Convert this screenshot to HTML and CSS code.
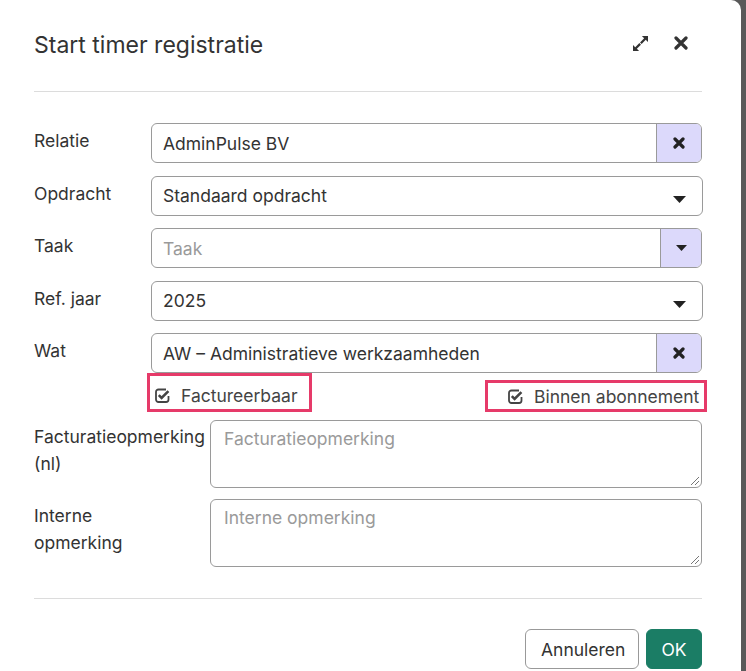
FILE: index.html
```html
<!DOCTYPE html>
<html lang="nl">
<head>
<meta charset="utf-8">
<title>Start timer registratie</title>
<link rel="stylesheet" href="styles.css">
</head>
<body>
<div class="modal">
  <div class="header">
    <h1 class="title">Start timer registratie</h1>
    <div class="tools">
      <svg class="icon-expand" width="16" height="16" viewBox="0 0 16 16">
        <path d="M16 0 L16 6.5 L13.6 4.1 L9.2 8.5 L7.5 6.8 L11.9 2.4 L9.5 0 Z" fill="#333"/>
        <path d="M0 16 L0 9.5 L2.4 11.9 L6.8 7.5 L8.5 9.2 L4.1 13.6 L6.5 16 Z" fill="#333"/>
      </svg>
      <svg class="icon-close" width="14" height="14" viewBox="0 0 14 14">
        <path d="M2 2 L12 12 M12 2 L2 12" stroke="#333" stroke-width="3.2" stroke-linecap="round"/>
      </svg>
    </div>
  </div>

  <div class="body">
    <div class="row">
      <div class="label">Relatie</div>
      <div class="field">
        <div class="control"><span class="value">AdminPulse BV</span></div>
        <div class="addon">
          <svg width="12" height="12" viewBox="0 0 12 12"><path d="M2 2 L10 10 M10 2 L2 10" stroke="#222" stroke-width="3.2" stroke-linecap="round"/></svg>
        </div>
      </div>
    </div>

    <div class="row">
      <div class="label">Opdracht</div>
      <div class="field select">
        <div class="control"><span class="value">Standaard opdracht</span></div>
        <svg class="caret" width="13" height="7" viewBox="0 0 13 7"><path d="M0 0 H13 L6.5 7 Z" fill="#222"/></svg>
      </div>
    </div>

    <div class="row">
      <div class="label">Taak</div>
      <div class="field">
        <div class="control"><span class="placeholder">Taak</span></div>
        <div class="addon addon-narrow">
          <svg width="11" height="6" viewBox="0 0 11 6"><path d="M0 0 H11 L5.5 6 Z" fill="#222"/></svg>
        </div>
      </div>
    </div>

    <div class="row">
      <div class="label">Ref. jaar</div>
      <div class="field select">
        <div class="control"><span class="value">2025</span></div>
        <svg class="caret" width="13" height="7" viewBox="0 0 13 7"><path d="M0 0 H13 L6.5 7 Z" fill="#222"/></svg>
      </div>
    </div>

    <div class="row">
      <div class="label">Wat</div>
      <div class="field">
        <div class="control"><span class="value">AW – Administratieve werkzaamheden</span></div>
        <div class="addon">
          <svg width="12" height="12" viewBox="0 0 12 12"><path d="M2 2 L10 10 M10 2 L2 10" stroke="#222" stroke-width="3.2" stroke-linecap="round"/></svg>
        </div>
      </div>
    </div>

    <div class="checks">
      <label class="check check-left">
        <svg width="15" height="15" viewBox="0 0 15 15"><path d="M11 1.5 H3.5 A2.5 2.5 0 0 0 1 4 V11.5 A2.5 2.5 0 0 0 3.5 14 H11 A2.5 2.5 0 0 0 13.5 11.5 V8" fill="none" stroke="#444" stroke-width="1.8"/><path d="M3.8 7.2 L6.6 10 L13.4 3.2" fill="none" stroke="#444" stroke-width="2.6"/></svg>
        <span>Factureerbaar</span>
      </label>
      <label class="check check-right">
        <svg width="15" height="15" viewBox="0 0 15 15"><path d="M11 1.5 H3.5 A2.5 2.5 0 0 0 1 4 V11.5 A2.5 2.5 0 0 0 3.5 14 H11 A2.5 2.5 0 0 0 13.5 11.5 V8" fill="none" stroke="#444" stroke-width="1.8"/><path d="M3.8 7.2 L6.6 10 L13.4 3.2" fill="none" stroke="#444" stroke-width="2.6"/></svg>
        <span>Binnen abonnement</span>
      </label>
    </div>

    <div class="row row-text">
      <div class="label label-wide">Facturatieopmerking<br>(nl)</div>
      <div class="textarea"><span class="placeholder">Facturatieopmerking</span><span class="grip"></span></div>
    </div>

    <div class="row row-text">
      <div class="label label-wide">Interne<br>opmerking</div>
      <div class="textarea"><span class="placeholder">Interne opmerking</span><span class="grip"></span></div>
    </div>
  </div>

  <div class="footer">
    <button class="btn btn-default">Annuleren</button>
    <button class="btn btn-primary">OK</button>
  </div>
</div>
</body>
</html>
```

FILE: styles.css
```css
html, body {
  margin: 0;
  padding: 0;
}
body {
  background: #595959;
  font-family: Inter, "Noto Sans", sans-serif;
  color: #333;
  overflow: hidden;
}
.modal {
  width: 741px;
  height: 700px;
  background: #fff;
  border-top-right-radius: 10px;
  box-sizing: border-box;
  padding: 0 39px 0 34px;
}
.header {
  height: 91px;
  border-bottom: 1px solid #dcdcdc;
  display: flex;
  align-items: center;
  justify-content: space-between;
}
.title {
  margin: 0;
  font-size: 23px;
  font-weight: 400;
  color: #333;
  padding-bottom: 1px;
}
.tools {
  display: flex;
  align-items: center;
  gap: 26px;
  margin-right: 14px;
  padding-bottom: 5px;
}
.icon-expand { width: 15px; height: 15px; }
.body {
  padding-top: 31px;
}
.row {
  display: flex;
  align-items: flex-start;
  margin-bottom: 12.5px;
}
.label {
  width: 117px;
  flex: none;
  font-size: 17.5px;
  line-height: 27px;
  padding-top: 4px;
  color: #333;
}
.field {
  flex: 1;
  height: 40px;
  box-sizing: border-box;
  border: 1px solid #9a9a9a;
  border-radius: 6px;
  display: flex;
  align-items: stretch;
  overflow: hidden;
}
.control {
  flex: 1;
  display: flex;
  align-items: center;
  padding-left: 11px;
  font-size: 17.5px;
}
.value { color: #333; }
.placeholder { color: #9a9a9a; }
.addon {
  width: 44px;
  flex: none;
  background: #dcd9fb;
  border-left: 1px solid #9a9a9a;
  display: flex;
  align-items: center;
  justify-content: center;
}
.addon-narrow { width: 40px; }
.select {
  align-items: center;
  margin-right: -1px;
}
.select .control { align-self: stretch; padding-bottom: 1px; }
.caret {
  margin-right: 16px;
  margin-top: 8px;
}
.checks {
  display: flex;
  justify-content: space-between;
  align-items: flex-end;
  margin: -12.5px -5px 0 113px;
  height: 39px;
}
.check {
  display: flex;
  align-items: center;
  gap: 11px;
  border: 3px solid #e63a69;
  box-sizing: border-box;
  font-size: 17.5px;
  color: #444;
}
.check-left {
  height: 39px;
  width: 165px;
  padding-left: 5px;
  padding-top: 5px;
}
.check-right {
  height: 32px;
  width: 222px;
  padding-left: 20px;
}
.row-text {
  margin-top: 8px;
  margin-bottom: 11px;
}
.label-wide {
  width: 176px;
  padding-top: 3px;
  white-space: nowrap;
}
.textarea {
  flex: 1;
  height: 68px;
  box-sizing: border-box;
  border: 1px solid #9a9a9a;
  border-radius: 6px;
  padding: 7px 13px;
  font-size: 17.5px;
  line-height: 22px;
  position: relative;
}
.grip {
  position: absolute;
  right: 2px;
  bottom: 2px;
  width: 8px;
  height: 8px;
  background: linear-gradient(135deg, transparent 45%, #777 45%, #777 55%, transparent 55%, transparent 70%, #777 70%, #777 80%, transparent 80%);
}
.footer {
  margin-top: 31px;
  border-top: 1px solid #dcdcdc;
  padding-top: 30px;
  display: flex;
  justify-content: flex-end;
  gap: 7px;
}
.btn {
  height: 40px;
  font-family: Inter, "Noto Sans", sans-serif;
  font-size: 17.5px;
  border-radius: 6px;
  padding: 0 15px;
  cursor: pointer;
}
.btn-default {
  background: #fff;
  border: 1px solid #999;
  color: #333;
  width: 114px;
}
.btn-primary {
  background: #1b7d65;
  border: 1px solid #1b7d65;
  color: #fff;
  width: 56px;
  padding: 0;
}
```
